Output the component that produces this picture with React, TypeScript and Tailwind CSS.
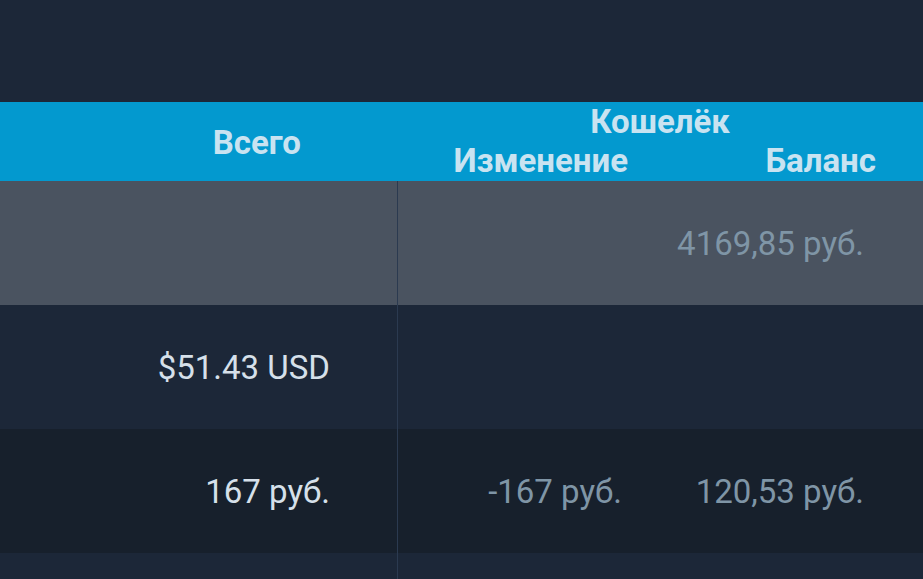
import React from "react";

const font = { fontFamily: "Roboto, 'Noto Sans', sans-serif" };

export default function App() {
  return (
    <div className="w-[923px] h-[579px] overflow-hidden bg-[#1c2738] flex flex-col" style={font}>
      <div className="h-[102px] shrink-0 bg-[#1c2738]" />
      <div className="h-[79px] shrink-0 bg-[#0399cf] flex text-[#c9e3f1] font-bold text-[33px] leading-none">
        <div className="w-[398px] shrink-0 flex items-center justify-end pr-[97px] pt-[1px]">Всего</div>
        <div className="flex-1 flex flex-col">
          <div className="flex justify-center pr-[1px] h-[38px] items-center">Кошелёк</div>
          <div className="flex h-[40px] items-center">
            <div className="w-[230px] shrink-0 flex justify-end">Изменение</div>
            <div className="flex-1 flex justify-end pr-[47px]">Баланс</div>
          </div>
        </div>
      </div>
      <Row bg="bg-[#4a5360]" total="" change="" balance="4169,85 руб." />
      <Row bg="bg-[#1c2738]" total="$51.43 USD" change="" balance="" />
      <Row bg="bg-[#17202c]" total="167 руб." change="-167 руб." balance="120,53 руб." />
      <Row bg="bg-[#1c2738]" total="" change="" balance="" />
    </div>
  );
}

function Row({ bg, total, change, balance }: { bg: string; total: string; change: string; balance: string }) {
  return (
    <div className={`h-[124px] shrink-0 flex text-[33px] leading-none ${bg}`}>
      <div className="w-[398px] shrink-0 border-r border-[#2b3a50] flex items-center justify-end pr-[67px] text-[#d6e0ea]">
        {total}
      </div>
      <div className="flex-1 flex items-center text-[#7f95a6]">
        <div className="w-[224px] shrink-0 flex justify-end">{change}</div>
        <div className="flex-1 flex justify-end pr-[59px]">{balance}</div>
      </div>
    </div>
  );
}
